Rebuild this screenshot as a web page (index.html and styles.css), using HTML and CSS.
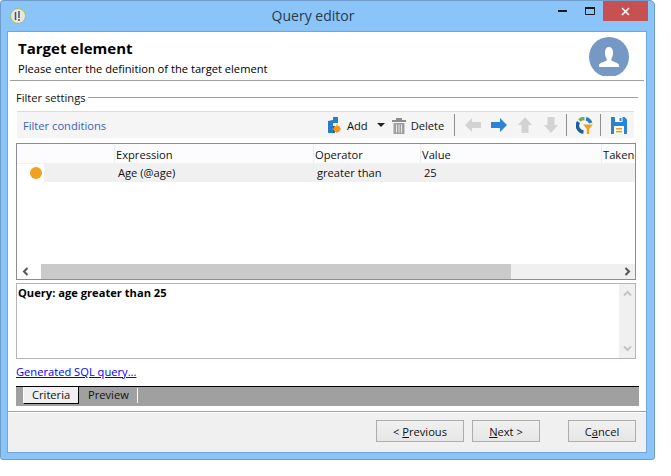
FILE: index.html
```html
<!DOCTYPE html>
<html lang="en">
<head>
    <meta charset="UTF-8">
    <title>Query editor</title>
    <link rel="stylesheet" href="styles.css">
</head>
<body>
<div class="window">
    <div class="titlebar">
        <svg class="app-icon" width="16" height="16" viewBox="0 0 16 16"><circle cx="8" cy="8" r="7.500" fill="#e6e6e6" stroke="#9cc45a"/><path d="M5.500 4v8M9 3v7" stroke="#555" stroke-width="1.500"/><circle cx="9" cy="12" r="1" fill="#555"/></svg>
        <span class="title">Query editor</span>
        <div class="winbtns">
            <span class="winbtn"><svg width="9" height="3" viewBox="0 0 9 3"><rect width="9" height="2" fill="#1a1a1a"/></svg></span>
            <span class="winbtn"><svg width="10" height="8" viewBox="0 0 10 8"><path d="M.5 1.500h9v6h-9z" fill="none" stroke="#1a1a1a"/><rect width="10" height="2" fill="#1a1a1a"/></svg></span>
            <span class="winbtn close"><svg width="9" height="9" viewBox="0 0 9 9"><path d="M1 1l7 7M8 1L1 8" stroke="#fff" stroke-width="1.600"/></svg></span>
        </div>
    </div>
    <div class="content">
        <div class="head">
            <div>
                <h1>Target element</h1>
                <p>Please enter the definition of the target element</p>
            </div>
            <svg class="avatar" width="40" height="39" viewBox="0 0 40 39"><circle cx="20" cy="20" r="20" fill="#7698c5"/><path d="M10 30v-2c0-2 6-3 7.500-4.500.5-1 0-2-.5-3-1.500-2-2-10.500 3-10.500s4.500 8.500 3 10.500c-.5 1-1 2-.5 3 1.500 1.500 7.500 2.500 7.500 4.500v2z" fill="#fff"/></svg>
        </div>
        <div class="main">
            <div class="legend"><span>Filter settings</span><i></i></div>
            <div class="toolbar">
                <span class="tb-title">Filter conditions</span>
                <svg class="add-icon" width="13" height="16" viewBox="0 0 13 16"><path d="M0 4l5-1v13H0z" fill="#2a7cc4"/><path d="M5 0h5v6H5z" fill="#2a7cc4"/><path d="M5 9h2v7H5z" fill="#1c5f9e"/><circle cx="9" cy="12" r="3.300" fill="#f39a1d"/><path d="M9 7.500v9M4.500 12h8.500" stroke="#f39a1d" stroke-width="1.200"/></svg>
                <span class="tb-text add">Add</span>
                <svg class="caret" width="8" height="4" viewBox="0 0 8 4"><path d="M0 0h8L4 4z" fill="#222"/></svg>
                <svg class="trash" width="14" height="17" viewBox="0 0 14 17"><path d="M0 3h14v2H0zM4 1h6v2H4z" fill="#8c8c8c"/><path d="M1.500 6h11v11h-11z" fill="#a0a0a0"/><path d="M4.500 7.500v8M7 7.500v8M9.500 7.500v8" stroke="#e8e8e8"/></svg>
                <span class="tb-text del">Delete</span>
                <i class="sep sep1"></i>
                <svg class="arr" width="16" height="14" viewBox="0 0 16 14"><path d="M0 7l7-7v4h9v6H7v4z" fill="#d3d3d3"/></svg>
                <svg class="arr a2" width="16" height="14" viewBox="0 0 16 14"><path d="M16 7L9 0v4H0v6h9v4z" fill="#2b83d6"/></svg>
                <svg class="arr a3" width="14" height="16" viewBox="0 0 14 16"><path d="M7 0l7 8h-3.500v8h-7V8H0z" fill="#d3d3d3"/></svg>
                <svg class="arr a4" width="14" height="16" viewBox="0 0 14 16"><path d="M7 16l7-8h-3.500V0h-7v8H0z" fill="#d3d3d3"/></svg>
                <i class="sep sep2"></i>
                <svg class="chart" width="17" height="17" viewBox="0 0 17 17"><path d="M3.500 3.500A6.500 6.500 0 0 1 8.500 1.500" fill="none" stroke="#6fb04a" stroke-width="3.500"/><path d="M10 1.700a6.500 6.500 0 0 1 4.700 4.300" fill="none" stroke="#2a7cc4" stroke-width="3.500"/><path d="M2.500 5a6.500 6.500 0 0 0 5 10" fill="none" stroke="#1d5f99" stroke-width="3.500"/><path d="M7 7.500h10l-3.800 4.500v5h-2.400v-5z" fill="#f0a020"/></svg>
                <i class="sep sep3"></i>
                <svg class="save" width="16" height="17" viewBox="0 0 16 17"><path d="M0 0h13.500L16 2.500V17H0z" fill="#2b83d6"/><path d="M4 0h7.500v5H4z" fill="#fff"/><path d="M8.500 1h2v3h-2z" fill="#2b83d6"/><path d="M3 9h10v8H3z" fill="#fff"/><path d="M5 11h6v1.500H5zM5 14h6v1.500H5z" fill="#f39a1d"/></svg>
            </div>
            <div class="list">
                <div class="list-head">
                    <span class="c0"></span>
                    <span class="c1">Expression</span>
                    <span class="c2">Operator</span>
                    <span class="c3">Value</span>
                    <span class="c4">Taken</span>
                </div>
                <div class="list-row">
                    <span class="dot"></span>
                    <span class="cell c1">Age (@age)</span>
                    <span class="cell c2">greater than</span>
                    <span class="cell c3">25</span>
                </div>
                <div class="hscroll">
                    <span class="sbtn"><svg width="7" height="9" viewBox="0 0 7 9"><path d="M5.500 1L2 4.500 5.500 8" fill="none" stroke="#555" stroke-width="2"/></svg></span>
                    <span class="thumb"></span>
                    <span class="sbtn end"><svg width="7" height="9" viewBox="0 0 7 9"><path d="M1.500 1L5 4.500 1.500 8" fill="none" stroke="#555" stroke-width="2"/></svg></span>
                </div>
            </div>
            <div class="query">
                <div class="query-text">Query: age greater than 25</div>
                <div class="vscroll">
                    <svg width="9" height="7" viewBox="0 0 9 7"><path d="M1 5.500L4.500 2 8 5.500" fill="none" stroke="#c4c4c4" stroke-width="2"/></svg>
                    <svg width="9" height="7" viewBox="0 0 9 7"><path d="M1 1.500L4.500 5 8 1.500" fill="none" stroke="#c4c4c4" stroke-width="2"/></svg>
                </div>
            </div>
            <a class="sql-link" href="#">Generated SQL query...</a>
            <div class="tabs">
                <span class="tab active">Criteria</span>
                <span class="tab">Preview</span>
            </div>
        </div>
        <div class="footer">
            <button class="btn prev">&lt; <u>P</u>revious</button>
            <button class="btn next"><u>N</u>ext &gt;</button>
            <button class="btn cancel">C<u>a</u>ncel</button>
        </div>
    </div>
</div>
</body>
</html>
```
FILE: styles.css
```css
* {
    box-sizing: border-box;
}
body {
    margin: 0;
    background: #fff;
    font-family: "Open Sans", "Noto Sans", sans-serif;
    font-size: 11.15px;
    color: #111;
}
.window {
    width: 655px;
    height: 460px;
    background: #8ac4f8;
    border: 1px solid #6f9ccb;
    border-radius: 3px 5px 3px 3px;
    padding: 0 7px 6px 6px;
    display: flex;
    flex-direction: column;
}
.titlebar {
    height: 30px;
    flex: none;
    display: flex;
    align-items: flex-start;
    position: relative;
}
.app-icon {
    margin: 7px 0 0 3px;
}
.title {
    position: absolute;
    left: 0;
    right: 28px;
    top: 5px;
    text-align: center;
    font-size: 14px;
    line-height: 20px;
    color: #2a3a48;
}
.winbtns {
    margin-left: auto;
    display: flex;
    margin-right: -1px;
    position: relative;
}
.winbtn {
    width: 27px;
    height: 20px;
    display: flex;
    align-items: center;
    justify-content: center;
}
.winbtn.close {
    width: 45px;
    background: #c75050;
}
.content {
    flex: 1;
    background: #fff;
    border: 1px solid #6fa6dc;
    display: flex;
    flex-direction: column;
    min-height: 0;
}
.head {
    height: 49px;
    flex: none;
    margin: 0 2px;
    padding: 6px 15px 0 8px;
    display: flex;
    justify-content: space-between;
    border-bottom: 1px solid #a0a0a0;
}
h1 {
    margin: 0;
    font-size: 15px;
    line-height: 20px;
    font-weight: 700;
    color: #000;
}
.head p {
    margin: 3px 0 0;
    line-height: 16px;
    color: #000;
}
.avatar {
    margin-top: -1px;
}
.main {
    flex: 1;
    padding: 8px 0 0 8px;
    min-height: 0;
}
.legend {
    display: flex;
    align-items: center;
    height: 17px;
    width: 622px;
}
.legend i {
    flex: 1;
    height: 1px;
    background: #a0a0a0;
    margin-left: 2px;
}
.toolbar {
    margin: 5px 0 0 1px;
    width: 617px;
    height: 27px;
    background: #f5f5f5;
    border-top: 1px solid #dcdcdc;
    display: flex;
    align-items: center;
}
.tb-title {
    flex: none;
    width: 305px;
    margin-left: 6px;
    color: #3a5fc0;
}
.tb-text {
    color: #111;
}
.add {
    margin-left: 6px;
}
.caret {
    margin-left: 9px;
}
.trash {
    margin-left: 7px;
}
.del {
    margin-left: 5px;
}
.sep {
    width: 1px;
    height: 22px;
    background: #8f8f8f;
}
.sep1 {
    margin-left: 10px;
}
.arr {
    margin-left: 10px;
}
.a2 {
    margin-left: 10px;
}
.a3 {
    margin-left: 11px;
}
.a4 {
    margin-left: 12px;
}
.sep2 {
    margin-left: 8px;
}
.chart {
    margin-left: 9px;
}
.sep3 {
    margin-left: 7px;
}
.save {
    margin-left: 10px;
}
.list {
    margin-top: 5px;
    width: 620px;
    height: 137px;
    border: 1px solid #8c8c94;
    display: flex;
    flex-direction: column;
    overflow: hidden;
}
.list-head, .list-row {
    display: grid;
    grid-template-columns: 98px 199px 107px 181px 1fr;
}
.list-head {
    height: 20px;
    background: #fcfcfe;
    border-bottom: 1px solid #eef3fb;
    line-height: 21px;
}
.list-head span {
    padding-left: 1px;
    border-right: 1px solid #e8eef8;
    white-space: nowrap;
    overflow: hidden;
}
.list-head .c4 {
    border-right: 0;
}
.list-row {
    height: 18px;
    line-height: 18px;
    margin-left: 27px;
    grid-template-columns: 71px 199px 107px 1fr;
    background: #f0f0f0;
    position: relative;
}
.dot {
    position: absolute;
    left: -14px;
    top: 3px;
    width: 12px;
    height: 12px;
    border-radius: 50%;
    background: #f2a01f;
}
.cell {
    white-space: nowrap;
    padding-left: 3px;
}
.cell.c1 {
    grid-column: 2;
}
.hscroll {
    margin-top: auto;
    height: 15px;
    background: #f0f0f0;
    display: flex;
    align-items: center;
}
.sbtn {
    width: 24px;
    height: 15px;
    flex: none;
    background: #fff;
    display: flex;
    align-items: center;
    justify-content: center;
    padding-right: 8px;
}
.sbtn.end {
    margin-left: auto;
    background: #f0f0f0;
    padding: 0 0 0 8px;
}
.thumb {
    width: 470px;
    height: 15px;
    background: #cacaca;
}
.query {
    margin-top: 3px;
    width: 620px;
    height: 76px;
    border: 1px solid #b4b4bc;
    display: flex;
    justify-content: space-between;
}
.query-text {
    padding: 1px 0 0 1px;
    line-height: 16px;
    font-weight: 700;
    color: #000;
}
.vscroll {
    width: 16px;
    background: #f0f0f0;
    display: flex;
    flex-direction: column;
    justify-content: space-between;
    align-items: center;
    padding: 6px 0;
}
.sql-link {
    display: block;
    margin-top: 5px;
    line-height: 16px;
    color: #0000ff;
}
.tabs {
    margin-top: 6px;
    width: 623px;
    height: 20px;
    background: #a0a0a0;
    border-top: 1px solid #000;
    display: flex;
    padding-left: 7px;
}
.tab {
    width: 59px;
    height: 15px;
    margin-top: 1px;
    line-height: 14px;
    padding-left: 9px;
    border-right: 1px solid #fff;
}
.tab.active {
    width: 56px;
    height: 17px;
    margin-top: 0;
    line-height: 15px;
    padding-left: 8px;
    background: #f0f0f0;
    border-left: 1px solid #fff;
    border-right: 1px solid #000;
    border-bottom: 1px solid #000;
}
.footer {
    flex: none;
    height: 41px;
    background: #f0f0f0;
    border-top: 1px solid #a0a0a0;
    box-shadow: inset 0 1px 0 #fff;
    margin-top: auto;
    display: flex;
    padding: 8px 10px 0 368px;
}
.btn {
    height: 22px;
    background: linear-gradient(#f0f0f0, #e6e6e6);
    border: 1px solid #adadad;
    font-family: inherit;
    font-size: 11.15px;
    color: #111;
    padding: 0;
}
.prev {
    width: 88px;
}
.next {
    width: 68px;
    margin-left: 8px;
}
.cancel {
    width: 68px;
    margin-left: 28px;
}
```
